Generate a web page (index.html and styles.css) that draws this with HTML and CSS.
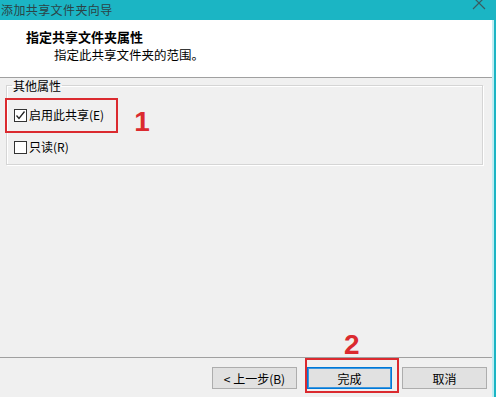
FILE: index.html
```html
<!DOCTYPE html>
<html lang="zh-CN">

<head>
  <meta charset="UTF-8">
  <meta name="viewport" content="width=device-width, initial-scale=1.0">
  <title>添加共享文件夹向导</title>
  <link rel="stylesheet" href="styles.css">
</head>

<body>

  <div class="window">
    <div class="titlebar">
      <span class="title">添加共享文件夹向导</span>
      <svg class="close" width="14" height="14" viewBox="0 0 14 14">
        <path d="M1 1 L13 13 M13 1 L1 13" stroke="#3b5b60" stroke-width="1.2" fill="none" />
      </svg>
    </div>

    <div class="panel">
      <div class="header">
        <div class="heading">指定共享文件夹属性</div>
        <div class="subheading">指定此共享文件夹的范围。</div>
      </div>

      <div class="content">
        <fieldset class="group">
          <legend>其他属性</legend>
          <div class="row">
            <label class="option mark">
              <span class="box">
                <svg width="11" height="11" viewBox="0 0 11 11">
                  <path d="M1.5 5.5 L4 8.5 L9.5 1.5" stroke="#222" stroke-width="1.3" fill="none" />
                </svg>
              </span>启用此共享(E)
            </label>
            <span class="num">1</span>
          </div>
          <label class="option plain">
            <span class="box"></span>只读(R)
          </label>
        </fieldset>
      </div>

      <div class="footer">
        <button class="btn back">&lt; 上一步(B)</button>
        <span class="mark mark-btn">
          <span class="num num-2">2</span>
          <button class="btn default">完成</button>
        </span>
        <button class="btn cancel">取消</button>
      </div>
    </div>
  </div>

</body>

</html>
```

FILE: styles.css
```css
* {
  box-sizing: border-box;
}

body {
  margin: 0;
  padding: 0;
  font-family: "Noto Sans CJK SC", sans-serif;
  color: #000;
}

.window {
  width: 496px;
  height: 397px;
  display: flex;
  flex-direction: column;
  background-color: #1bb5c4;
  overflow: hidden;
}

.titlebar {
  height: 20px;
  flex: none;
  display: flex;
  justify-content: space-between;
  align-items: center;
  overflow: hidden;
}

.titlebar .title {
  padding-left: 1px;
  font-size: 12px;
  line-height: 20px;
  letter-spacing: 0.4px;
  color: #2b4346;
}

.titlebar .close {
  align-self: flex-start;
  margin-top: -4px;
  margin-right: 10px;
}

.panel {
  flex: 1;
  display: flex;
  flex-direction: column;
  margin-right: 4px;
  background-color: #f0f0f0;
  box-shadow: 2px 0 0 #bfeef3;
}

.header {
  height: 58px;
  flex: none;
  padding-top: 9px;
  background-color: #fff;
  border-bottom: 1px solid #a0a0a0;
}

.header .heading {
  padding-left: 26px;
  font-size: 13px;
  font-weight: bold;
  line-height: 16px;
}

.header .subheading {
  margin-top: 2px;
  padding-left: 54px;
  font-size: 12.5px;
  line-height: 16px;
}

.content {
  flex: 1;
  padding: 0 9px 0 6px;
}

.group {
  margin: 0;
  min-width: 0;
  padding: 0 0 9px 0;
  border: 1px solid #d5d5d5;
  box-shadow: inset 1px 1px 0 #fff, 1px 1px 0 #fff;
}

.group legend {
  margin-left: 5px;
  padding: 0 1px;
  font-size: 12px;
  line-height: 15px;
}

.group .row {
  margin-top: 5px;
  display: flex;
  align-items: flex-end;
}

.option {
  display: flex;
  align-items: center;
  font-size: 12px;
  line-height: 16px;
}

.option.plain {
  margin-top: 6px;
  padding-left: 7px;
}

.option .box {
  width: 13px;
  height: 13px;
  margin-right: 2px;
  display: inline-flex;
  align-items: center;
  justify-content: center;
  border: 1px solid #333;
  background-color: #fff;
}

.mark {
  border: 2px solid #db2a2f;
}

.option.mark {
  margin-left: -2px;
  padding: 7px 12px 8px 7px;
}

.num {
  font-family: "Liberation Sans", sans-serif;
  font-size: 28px;
  font-weight: bold;
  line-height: 28px;
  color: #db2a2f;
}

.row .num {
  margin-left: 16px;
  margin-bottom: -3px;
}

.footer {
  height: 40px;
  flex: none;
  display: flex;
  justify-content: flex-end;
  align-items: flex-start;
  padding: 0 5px 4px 0;
  border-top: 1px solid #a0a0a0;
}

.btn {
  width: 85px;
  height: 22px;
  margin: 9px 0 0 0;
  padding: 0;
  font-family: "Noto Sans CJK SC", sans-serif;
  font-size: 12px;
  color: #000;
  background-color: #e1e1e1;
  border: 1px solid #adadad;
}

.btn.back {
  margin-right: 8px;
}

.btn.cancel {
  margin-left: 3px;
}

.mark-btn {
  position: relative;
  display: flex;
  padding: 7px 5px 2px 0;
}

.mark-btn .btn {
  margin-top: 0;
}

.btn.default {
  border-color: #0078d7;
  box-shadow: inset 0 0 0 1px #3c96de;
}

.num-2 {
  position: absolute;
  left: 37px;
  bottom: 32px;
}
```
